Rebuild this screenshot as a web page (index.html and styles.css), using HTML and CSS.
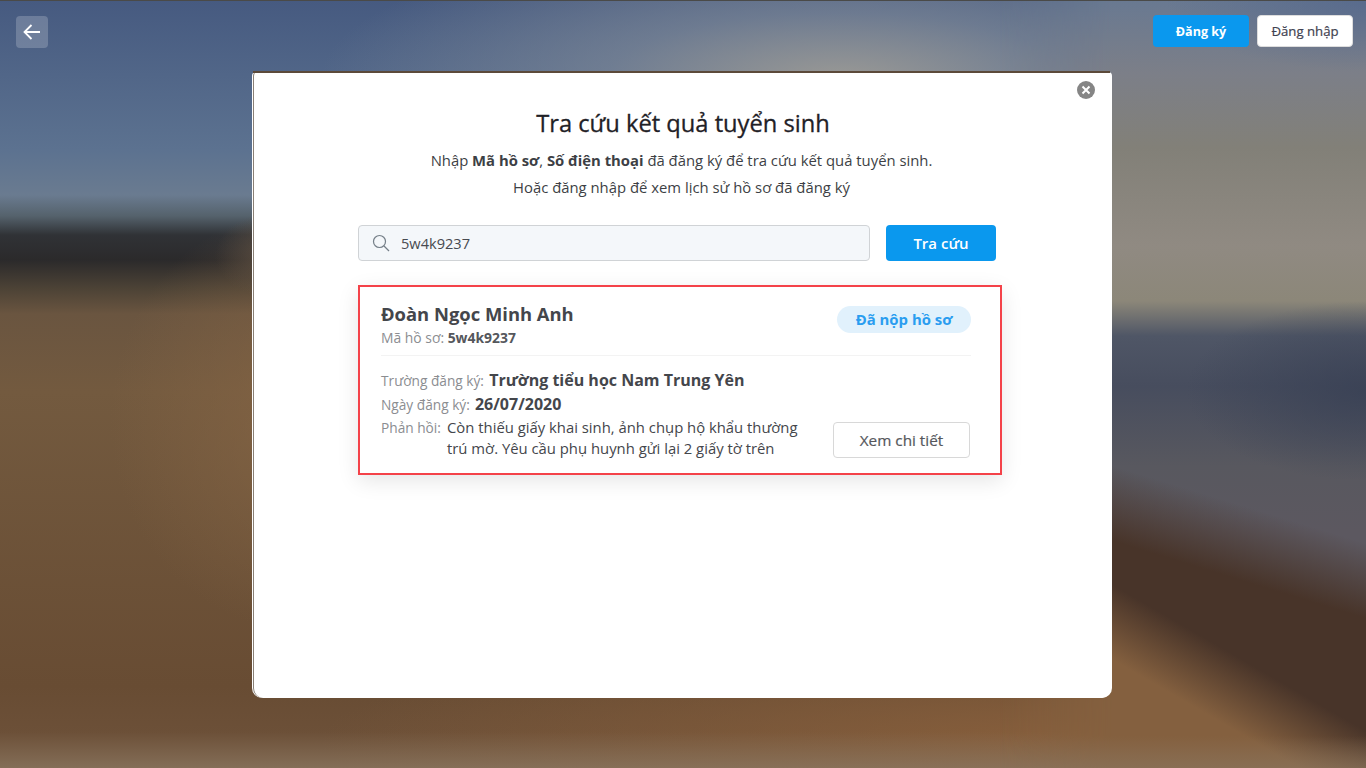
FILE: index.html
```html
<!DOCTYPE html>
<html lang="vi">
<head>
    <meta charset="UTF-8">
    <meta name="viewport" content="width=device-width, initial-scale=1.0">
    <title>Tra cứu kết quả tuyển sinh</title>
    <link rel="stylesheet" href="styles.css">
</head>
<body>
    <header class="topbar">
        <a class="back-btn" href="#" aria-label="Quay lại">
            <svg width="20" height="20" viewBox="0 0 20 20" fill="none" stroke="#fff" stroke-width="1.8">
                <path d="M18 10H2.5M9.5 3L2.5 10L9.5 17"/>
            </svg>
        </a>
        <div class="auth">
            <button class="btn-register">Đăng ký</button>
            <button class="btn-login">Đăng nhập</button>
        </div>
    </header>

    <main class="modal">
        <button class="close" aria-label="Đóng">
            <svg width="18" height="18" viewBox="0 0 18 18">
                <circle cx="9" cy="9" r="9" fill="#858585"/>
                <path d="M5.5 5.5L12.5 12.5M12.5 5.5L5.5 12.5" stroke="#fff" stroke-width="2"/>
            </svg>
        </button>

        <h1 class="title">Tra cứu kết quả tuyển sinh</h1>
        <p class="intro">Nhập <b>Mã hồ sơ</b>, <b>Số điện thoại</b> đã đăng ký để tra cứu kết quả tuyển sinh.</p>
        <p class="intro">Hoặc đăng nhập để xem lịch sử hồ sơ đã đăng ký</p>

        <form class="search">
            <label class="search-box">
                <svg width="18" height="18" viewBox="0 0 18 18" fill="none" stroke="#757f88" stroke-width="1.2">
                    <circle cx="7.5" cy="7.5" r="6"/>
                    <path d="M12 12L17 17"/>
                </svg>
                <input type="text" value="5w4k9237">
            </label>
            <button type="button" class="btn-search">Tra cứu</button>
        </form>

        <section class="result">
            <div class="result-head">
                <div class="who">
                    <div class="student">Đoàn Ngọc Minh Anh</div>
                    <div class="code">Mã hồ sơ: <b>5w4k9237</b></div>
                </div>
                <span class="badge">Đã nộp hồ sơ</span>
            </div>
            <div class="result-body">
                <div class="row school"><span class="label">Trường đăng ký:</span> <b>Trường tiểu học Nam Trung Yên</b></div>
                <div class="row date"><span class="label">Ngày đăng ký:</span> <b>26/07/2020</b></div>
                <div class="row-last">
                    <span class="label">Phản hồi:</span>
                    <p class="feedback">Còn thiếu giấy khai sinh, ảnh chụp hộ khẩu thường trú mờ. Yêu cầu phụ huynh gửi lại 2 giấy tờ trên</p>
                    <button class="btn-detail">Xem chi tiết</button>
                </div>
            </div>
        </section>
    </main>
</body>
</html>
```

FILE: styles.css
```css
* {
    box-sizing: border-box;
    font-family: 'Open Sans', 'Noto Sans', sans-serif;
}

html, body {
    height: 100%;
}

/* blurred beach photo, only the parts around the modal are visible */
body {
    position: relative;
    margin: 0;
    overflow: hidden;
    border-top: 1px solid #4a4a48;
    background-color: #6c5038;
    background-image:
        radial-gradient(ellipse 520px 150px at 840px 80px, #9a9995, rgba(128, 138, 152, 0.65) 45%, rgba(128, 138, 152, 0)),
        linear-gradient(to top, rgba(140, 120, 98, 0.75), rgba(140, 120, 98, 0) 36px),
        radial-gradient(ellipse 800px 110px at 1120px 740px, rgba(138, 96, 60, 0.95), rgba(138, 96, 60, 0)),
        radial-gradient(ellipse 70px 45px at 285px 255px, rgba(100, 84, 68, 0.95), rgba(100, 84, 68, 0)),
        radial-gradient(ellipse 190px 210px at 300px 420px, rgba(132, 100, 68, 0.8), rgba(132, 100, 68, 0)),
        linear-gradient(180deg, #465a80 0, #5c7290 150px, #6a7b90 195px, #55626c 216px, #303236 235px, #2b2a2b 260px, #4d4336 289px, #6a5540 314px, #735a3f 392px, #684c33 686px, #6c5038 735px);
}

/* right side of the photo: sky, sea, dark rock, sand */
body::before {
    content: "";
    position: absolute;
    top: 0;
    left: 1000px;
    width: 366px;
    height: 100%;
    background-image:
        linear-gradient(to top, rgba(140, 120, 98, 0.6), rgba(140, 120, 98, 0) 32px),
        linear-gradient(30deg, #84603f 150px, rgba(132, 96, 63, 0) 215px),
        linear-gradient(17deg, #483429 250px, rgba(72, 52, 41, 0) 322px),
        radial-gradient(ellipse 180px 90px at 366px 390px, rgba(56, 64, 84, 0.8), rgba(56, 64, 84, 0)),
        radial-gradient(ellipse 200px 70px at 366px 0, rgba(78, 98, 138, 0.6), rgba(78, 98, 138, 0)),
        linear-gradient(180deg, #697991 0, #7c7f88 73px, #828078 147px, #908a82 245px, #8c8779 300px, #4f5666 335px, #474d5e 385px, #58585f 465px, #5c5860 530px);
    -webkit-mask-image: linear-gradient(to right, transparent, #000 112px);
    mask-image: linear-gradient(to right, transparent, #000 112px);
}

.topbar {
    position: relative;
    display: flex;
    justify-content: space-between;
    height: 47px;
    padding: 15px 13px 0 16px;
}

.back-btn {
    display: flex;
    align-items: center;
    justify-content: center;
    width: 32px;
    height: 32px;
    background: rgba(255, 255, 255, 0.2);
    border-radius: 4px;
}

.auth {
    display: flex;
    gap: 8px;
    margin-top: -1px;
}

button {
    cursor: pointer;
}

.btn-register, .btn-login {
    width: 96px;
    height: 32px;
    padding: 0;
    border-radius: 4px;
    font-size: 13.2px;
}

.btn-register {
    border: none;
    background: #0a98ee;
    color: #fff;
    font-weight: 700;
    font-size: 12.6px;
}

.btn-login {
    border: 1px solid #ddd;
    background: #fff;
    color: #3f4250;
    -webkit-text-stroke: 0.2px;
}

.modal {
    position: relative;
    width: 859px;
    height: 626px;
    margin: 24px 0 0 253px;
    padding-top: 36px;
    background: #fff;
    border-left: 1px solid #8a8076;
    border-radius: 4px 4px 10px 10px;
    box-shadow: -1px 0 0 #fff;
}

.modal::before {
    content: "";
    position: absolute;
    top: -1px;
    left: -1px;
    right: 2px;
    height: 2px;
    background: #5c4a3a;
}

.close {
    position: absolute;
    top: 9px;
    right: 17px;
    display: flex;
    padding: 0;
    border: none;
    background: none;
}

.title {
    margin: 0 0 9px;
    font-size: 23.7px;
    line-height: 30px;
    font-weight: 400;
    color: #1f2126;
    -webkit-text-stroke: 0.3px;
    text-align: center;
}

.intro {
    margin: 0;
    padding-right: 3px;
    font-size: 14.85px;
    line-height: 27px;
    color: #3d3f45;
    text-align: center;
}

.search {
    display: flex;
    gap: 16px;
    margin: 24px 0 0 104px;
}

.search-box {
    display: flex;
    align-items: center;
    gap: 11px;
    width: 512px;
    height: 36px;
    padding-left: 13px;
    background: #f4f7fa;
    border: 1px solid #d0d3d6;
    border-radius: 4px;
}

.search-box input {
    width: 400px;
    padding: 0;
    border: none;
    outline: none;
    background: none;
    font-size: 14.6px;
    color: #474a50;
}

.btn-search {
    width: 110px;
    height: 36px;
    padding: 0;
    border: none;
    border-radius: 4px;
    background: #0a98ee;
    color: #fff;
    font-size: 15px;
    font-weight: 600;
}

.result {
    width: 644px;
    height: 190px;
    margin: 24px 0 0 104px;
    padding: 0 29px 0 21px;
    border: 2px solid #f44249;
    box-shadow: 0 6px 20px rgba(0, 0, 0, 0.1);
}

.result-head {
    display: flex;
    justify-content: space-between;
    align-items: flex-start;
    height: 69px;
    border-bottom: 1px solid #f3f3f3;
}

.who {
    padding-top: 14px;
}

.student {
    font-size: 18.4px;
    line-height: 26px;
    font-weight: 700;
    color: #44464b;
}

.code {
    font-size: 13.9px;
    line-height: 22px;
    color: #8b8d91;
}

.code b {
    font-weight: 700;
    color: #55575c;
}

.badge {
    display: block;
    width: 134px;
    height: 27px;
    margin-top: 19px;
    background: #e1f1fc;
    border-radius: 14px;
    color: #2a9df0;
    font-size: 14.9px;
    line-height: 27px;
    font-weight: 700;
    text-align: center;
}

.result-body {
    padding-top: 12px;
}

.row {
    height: 24px;
    line-height: 24px;
    color: #44464b;
    font-size: 16px;
}

.row b {
    margin-left: 1px;
    font-weight: 700;
}

.label {
    font-size: 13.7px;
    font-weight: 400;
    color: #8b8d91;
}

.row-last {
    display: flex;
    align-items: flex-start;
    padding-top: 1px;
}

.row-last .label {
    width: 66px;
    line-height: 21px;
    flex: none;
}

.feedback {
    width: 370px;
    margin: 0;
    font-size: 14.85px;
    line-height: 21px;
    color: #44464b;
}

.btn-detail {
    width: 137px;
    height: 36px;
    margin: 5px 0 0 16px;
    padding: 0;
    background: #fff;
    border: 1px solid #d8d8d8;
    border-radius: 4px;
    color: #55575c;
    font-size: 15.3px;
    -webkit-text-stroke: 0.2px;
}
```
